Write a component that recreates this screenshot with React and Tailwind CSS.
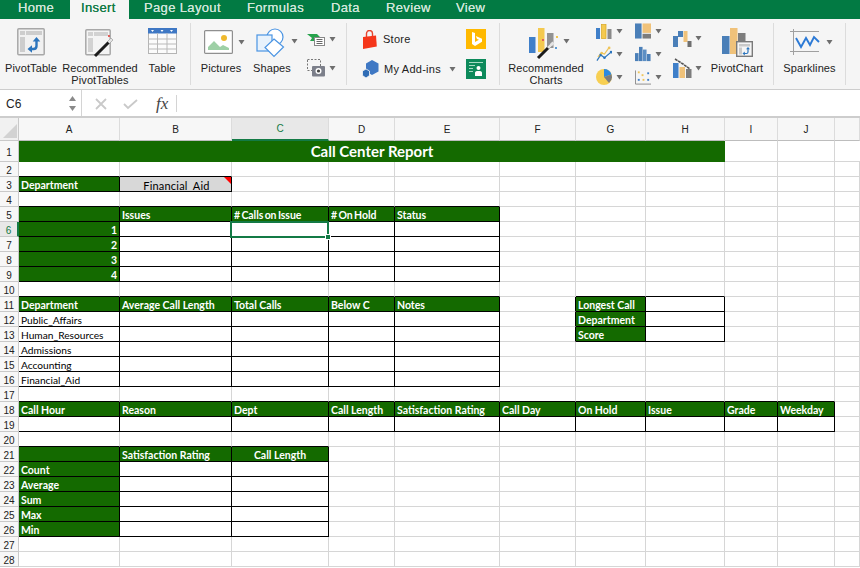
import React from "react";

const UI = { fontFamily: '"Liberation Sans", Arial, sans-serif' };
const CELL = { fontFamily: 'Lato, "Open Sans", sans-serif' };

const Caret = ({ className = "" }) => (
  <svg width="7" height="5" viewBox="0 0 7 5" className={className}><path d="M.5 0h6L3.500 4.500z" fill="#6e6e6e" /></svg>
);

const Pivot = () => (
  <svg width="28" height="28" viewBox="0 0 28 28">
    <rect x=".8" y=".8" width="26.400" height="25.900" rx="1" fill="#f1f1f1" stroke="#a8a8a8" strokeWidth="1.500" />
    <rect x="3" y="3" width="5" height="4" fill="#cdcdcd" />
    <rect x="9" y="3" width="16" height="4" fill="#cdcdcd" />
    <rect x="3" y="9" width="5" height="15" fill="#cdcdcd" />
    <path d="M13 21h3.500c2 0 3-1 3-3v-5" fill="none" stroke="#2c75bd" strokeWidth="2.400" />
    <path d="M10.500 21l4.500-3.800v7.600zM19.500 9l-3.800 4.500h7.600z" fill="#2c75bd" />
  </svg>
);
const Wand = ({ dx = 0, dy = 0 }) => (
  <g transform={`translate(${dx} ${dy})`}>
    <path d="M1 25L18 8" stroke="#1c1c1c" strokeWidth="3" />
    <path d="M14.500 11.500L18 8" stroke="#e4e4e4" strokeWidth="3" />
    <rect x="14" y="4" width="2" height="2" fill="#e0605a" />
    <rect x="21" y="1" width="2" height="2" fill="#f0c64e" />
    <rect x="21" y="11" width="2" height="2" fill="#5b9bd5" />
  </g>
);
const RecPivot = () => (
  <svg width="30" height="30" viewBox="0 0 30 30">
    <rect x=".8" y="1.800" width="24.400" height="24.900" rx="1" fill="#f4f4f4" stroke="#a8a8a8" strokeWidth="1.500" />
    <rect x="3" y="4" width="5" height="4" fill="#d2d2d2" />
    <rect x="9" y="4" width="14" height="4" fill="#d2d2d2" />
    <rect x="3" y="10" width="5" height="14" fill="#d2d2d2" />
    <Wand dx="9" dy="3" />
  </svg>
);
const TableIcon = () => (
  <svg width="29" height="27" viewBox="0 0 29 27">
    <rect x=".5" y=".5" width="28" height="25" fill="#fbfbfb" stroke="#b4b4b4" />
    <rect x="0" y="0" width="29" height="5.500" fill="#3f78c4" />
    <path d="M3 2h3L4.500 4zM12.500 2h3L14 4zM22 2h3L23.500 4z" fill="#fff" />
    <path d="M0 11h29M0 16h29M0 21h29M9.500 5v21M19 5v21" stroke="#b9b9b9" strokeWidth="1" />
  </svg>
);
const Pictures = () => (
  <svg width="29" height="24" viewBox="0 0 29 24">
    <rect x=".6" y=".6" width="27.800" height="22.800" rx="1" fill="#fff" stroke="#8f8f8f" strokeWidth="1.200" />
    <circle cx="20" cy="8" r="3" fill="#efb92e" />
    <path d="M4 20v-3l6-6 6 6 3-2 6 3v2z" fill="#9ed0a6" />
  </svg>
);
const Shapes = () => (
  <svg width="30" height="30" viewBox="0 0 30 30">
    <circle cx="19" cy="9" r="8" fill="#fff" stroke="#4a94e3" strokeWidth="1.200" />
    <rect x="1" y="7" width="15" height="16" fill="#e8f2fc" stroke="#4a94e3" strokeWidth="1.200" />
    <path d="M18 11l9.500 8-9.500 9.500L9 19.500z" fill="#fff" stroke="#4a94e3" strokeWidth="1.200" />
  </svg>
);
const SmartArt = () => (
  <svg width="18" height="13" viewBox="0 0 18 13">
    <path d="M0 1h10l3 3-3 4H3l2-3z" fill="#27a24c" />
    <rect x="7.500" y="4.500" width="10" height="8" fill="#fff" stroke="#888" />
    <path d="M9.500 6.500h6M9.500 8.500h6M9.500 10.500h6" stroke="#666" />
  </svg>
);
const Screenshot = () => (
  <svg width="18" height="18" viewBox="0 0 18 18">
    <rect x=".5" y=".5" width="13" height="11" fill="none" stroke="#777" strokeDasharray="2 1.500" />
    <rect x="5" y="7" width="13" height="10.500" rx="1" fill="#7c7f8a" />
    <circle cx="11.500" cy="12" r="3" fill="#fff" />
    <circle cx="11.500" cy="12" r="1.600" fill="#444" />
  </svg>
);
const StoreIcon = () => (
  <svg width="15" height="19" viewBox="0 0 15 19">
    <path d="M4.500 7V3.500a3 3 0 0 1 6 0V7" fill="none" stroke="#e8432c" strokeWidth="1.400" />
    <path d="M1 7l13-1.500.8 11L1 19z" fill="#f5361a" />
  </svg>
);
const AddIns = () => (
  <svg width="17" height="18" viewBox="0 0 17 18">
    <path d="M10 0l6.500 3.500v8L10 15l-6-3.500v-8z" fill="#3f78c4" />
    <path d="M4 9l3.500 2v4.500L4 18 .5 15.500V11z" fill="#2f6cb5" stroke="#f5f5f5" strokeWidth=".8" />
  </svg>
);
const Bing = () => (
  <svg width="20" height="20" viewBox="0 0 20 20">
    <rect width="20" height="20" fill="#ffb900" />
    <path d="M6 3l3 1v9l4-2.200-2-.9-1.200-3L16 9.800v3L9 17l-3-2z" fill="#fff" />
  </svg>
);
const People = () => (
  <svg width="20" height="20" viewBox="0 0 20 20">
    <rect width="20" height="20" fill="#0d8a5b" />
    <path d="M3 3.500h14M3 6.500h6M3 9.500h4M3 12.500h4" stroke="#a8dbc4" />
    <circle cx="12.500" cy="9" r="2" fill="#fff" />
    <path d="M9 17v-3.500a2 2 0 0 1 2-1.500h3a2 2 0 0 1 2 1.500V17z" fill="#fff" />
  </svg>
);
const RecCharts = () => (
  <svg width="30" height="32" viewBox="0 0 30 32">
    <rect x="0" y="9" width="6.500" height="16" fill="#3f7fc9" />
    <rect x="9" y="0" width="6.500" height="24" fill="#f4c94f" />
    <rect x="18" y="5" width="6.500" height="15" fill="#929292" />
    <g transform="translate(9 5)"><path d="M0 25L13 12" stroke="#1c1c1c" strokeWidth="3" /><path d="M10 15l5.500-5.500" stroke="#e4e4e4" strokeWidth="3" /></g>
    <rect x="13" y="11" width="2" height="2" fill="#e0605a" />
    <rect x="27" y="8" width="2" height="2" fill="#f0c64e" />
    <rect x="26" y="19" width="2" height="2" fill="#5b9bd5" />
  </svg>
);
const ColChart = () => (
  <svg width="16" height="15" viewBox="0 0 16 15">
    <rect x="0" y="4" width="4" height="11" fill="#3f7fc9" />
    <rect x="5.500" y=".5" width="4.500" height="14" fill="#f4c94f" stroke="#d8a520" strokeWidth=".7" />
    <rect x="11.500" y="5" width="4" height="10" fill="#8a8a8a" />
  </svg>
);
const LineChart = () => (
  <svg width="17" height="16" viewBox="0 0 17 16">
    <path d="M1 15l4-6 4 3 7-6" fill="none" stroke="#2c75bd" strokeWidth="1.300" />
    <path d="M2 11l4-4 3 1 5-7" fill="none" stroke="#efc55a" strokeWidth="1.300" />
    <circle cx="5" cy="9" r="1.400" fill="#2c75bd" /><circle cx="9" cy="12" r="1.400" fill="#2c75bd" />
    <circle cx="16" cy="6" r="1.400" fill="#2c75bd" /><circle cx="6" cy="7" r="1.400" fill="#efc55a" />
    <circle cx="14" cy="1.500" r="1.400" fill="#efc55a" />
  </svg>
);
const PieChart = () => (
  <svg width="16" height="16" viewBox="0 0 16 16">
    <circle cx="8" cy="8" r="8" fill="#f7cf52" />
    <path d="M8 8V0a8 8 0 0 1 7.500 5.500z" fill="#2c8ae0" />
    <path d="M8 8l7.500-2.500A8 8 0 0 1 13 14z" fill="#7c7c7c" />
  </svg>
);
const Treemap = () => (
  <svg width="17" height="16" viewBox="0 0 17 16">
    <rect x="0" y="0" width="7" height="16" fill="#4a7fb8" />
    <rect x="8" y="0" width="9" height="10" fill="#f0c27a" />
    <rect x="8" y="11" width="9" height="5" fill="#7d7d7d" />
  </svg>
);
const Histo = () => (
  <svg width="18" height="16" viewBox="0 0 18 16">
    <rect x="0" y="7" width="4" height="9" fill="#4a7fb8" />
    <rect x="4.500" y="0" width="4" height="16" fill="#4a7fb8" />
    <rect x="9" y="3" width="4" height="13" fill="#5c8fc4" />
    <rect x="13.500" y="8" width="4" height="8" fill="#4a7fb8" />
  </svg>
);
const Scatter = () => (
  <svg width="17" height="15" viewBox="0 0 17 15">
    <path d="M.5 0v14.500H17" fill="none" stroke="#8a8a8a" />
    <rect x="3" y="1" width="2" height="2" fill="#efc55a" /><rect x="3" y="9" width="2" height="2" fill="#3f7fc9" />
    <rect x="7" y="4" width="2" height="2" fill="#efc55a" /><rect x="8" y="9" width="2" height="2" fill="#efc55a" />
    <rect x="13" y="2" width="2" height="2" fill="#3f7fc9" /><rect x="13" y="9" width="2" height="2" fill="#3f7fc9" />
  </svg>
);
const Waterfall = () => (
  <svg width="19" height="17" viewBox="0 0 19 17">
    <path d="M0 17V6h5V1h5v6H5v10z" fill="#4a7fb8" />
    <rect x="10.500" y="1" width="4" height="11" fill="#f0c27a" />
    <rect x="14.500" y="11" width="4" height="6" fill="#6f6f6f" />
  </svg>
);
const Combo = () => (
  <svg width="19" height="20" viewBox="0 0 19 20">
    <rect x="0" y="5" width="5.500" height="15" fill="#3f7fc9" />
    <rect x="6.500" y="9" width="5.500" height="11" fill="#f0c27a" />
    <rect x="13" y="11" width="5.500" height="9" fill="#7d7d7d" />
    <path d="M2 1l8 5 7 5" fill="none" stroke="#555" strokeWidth="1.600" strokeDasharray="3 .6" />
  </svg>
);
const PivotChart = () => (
  <svg width="31" height="29" viewBox="0 0 31 29">
    <rect x="0" y="8" width="7.500" height="18" fill="#4a7fb8" />
    <rect x="8" y="0" width="7.500" height="26" fill="#f0c27a" />
    <rect x="16" y="5" width="7.500" height="8" fill="#7d7d7d" />
    <rect x="14.700" y="13.700" width="15.600" height="14.600" fill="#f5f5f5" stroke="#7a7a7a" strokeWidth="1.400" />
    <rect x="17" y="16" width="11" height="2.500" fill="#c9c9c9" />
    <rect x="17" y="19.500" width="3" height="7" fill="#c9c9c9" />
    <path d="M22 25.500h2.500c1 0 1.500-.5 1.500-1.500v-3" fill="none" stroke="#2c75bd" strokeWidth="1.200" />
    <path d="M20.500 25.500l2.300-2v4zM26 19l-2 2.300h4z" fill="#2c75bd" />
  </svg>
);
const Sparkline = () => (
  <svg width="30" height="26" viewBox="0 0 30 26">
    <path d="M3.500 0v26M0 2.500h29M0 22.500h29" stroke="#a0a0a0" fill="none" />
    <path d="M6 9l5 9 5-9 4 7 4-8 5 5" fill="none" stroke="#2c7ad6" strokeWidth="1.900" />
  </svg>
);

const Label = ({ children }) => (
  <div className="text-[11px] leading-[12px] text-[#222] text-center tracking-[0.1px] whitespace-nowrap">{children}</div>
);
const Big = ({ w, icon, children }) => (
  <div className="shrink-0 flex flex-col items-center pt-[9px]" style={{ width: w }}>
    <div className="h-[34px] flex items-start justify-center">{icon}</div>
    <Label>{children}</Label>
  </div>
);
const Sep = () => <div className="shrink-0 w-px h-[62px] mt-[4px] bg-[#dcdcdc]" />;
const Small = ({ icon, w = 16 }) => (
  <div className="flex items-center gap-[4px] h-[16px]">
    <div className="flex justify-center" style={{ width: w }}>{icon}</div>
    <Caret />
  </div>
);

const Ribbon = () => (
  <div className="flex h-[70px] bg-[#f5f5f5] pl-[2px]">
    <Big w={58} icon={<Pivot />}>PivotTable</Big>
    <Big w={80} icon={<RecPivot />}>Recommended<br />PivotTables</Big>
    <Big w={44} icon={<TableIcon />}>Table</Big>
    <div className="w-[6px]" />
    <Sep />
    <div className="w-[5px]" />
    <div className="w-[50px] shrink-0 flex flex-col items-center pt-[11px]">
      <div className="h-[32px] flex gap-[5px] ml-[7px]"><Pictures /><Caret className="mt-[10px]" /></div>
      <Label>Pictures</Label>
    </div>
    <div className="w-[52px] shrink-0 flex flex-col items-center pt-[9px]">
      <div className="h-[34px] flex gap-[5px] ml-[9px]"><Shapes /><Caret className="mt-[11px]" /></div>
      <Label>Shapes</Label>
    </div>
    <div className="w-[48px] shrink-0 flex flex-col gap-[13px] pl-[9px] pt-[14px]">
      <div className="flex items-center gap-[4px] h-[13px]"><SmartArt /><Caret /></div>
      <div className="flex items-center gap-[4px] h-[18px]"><Screenshot /><Caret /></div>
    </div>
    <Sep />
    <div className="w-[15px]" />
    <div className="w-[104px] shrink-0 flex flex-col gap-[10px] pt-[10px] text-[11px] text-[#222] tracking-[0.25px]">
      <div className="flex items-center gap-[6px] h-[20px]"><StoreIcon />Store</div>
      <div className="flex items-center gap-[5px] h-[20px]"><AddIns />My Add-ins<Caret className="ml-[3px]" /></div>
    </div>
    <div className="w-[33px] shrink-0 flex flex-col gap-[10px] pt-[10px]"><Bing /><People /></div>
    <Sep />
    <div className="w-[92px] shrink-0 flex flex-col items-center pt-[9px]">
      <div className="h-[34px] flex gap-[4px] ml-[7px]"><RecCharts /><Caret className="mt-[11px]" /></div>
      <Label>Recommended<br />Charts</Label>
    </div>
    <div className="w-[4px]" />
    <div className="w-[39px] shrink-0 flex flex-col gap-[7px] pt-[4px]">
      <Small icon={<ColChart />} /><Small icon={<LineChart />} /><Small icon={<PieChart />} />
    </div>
    <div className="w-[38px] shrink-0 flex flex-col gap-[7px] pt-[4px]">
      <Small icon={<Treemap />} /><Small icon={<Histo />} /><Small icon={<Scatter />} />
    </div>
    <div className="w-[33px] shrink-0 flex flex-col gap-[11px] pt-[11px]">
      <div className="flex items-center gap-[3px] h-[17px]"><Waterfall /><Caret /></div>
      <div className="flex items-center gap-[3px] h-[20px]"><Combo /><Caret /></div>
    </div>
    <Big w={62} icon={<PivotChart />}>PivotChart</Big>
    <div className="w-[5px]" />
    <Sep />
    <div className="w-[71px] shrink-0 flex flex-col items-center pt-[10px]">
      <div className="h-[33px] flex gap-[6px] ml-[4px]"><Sparkline /><Caret className="mt-[11px]" /></div>
      <Label>Sparklines</Label>
    </div>
    <Sep />
  </div>
);

const Tabs = () => (
  <div className="flex h-[19px] bg-[#027a43] text-[13px] leading-[15px] font-normal tracking-[0.35px] text-[#cfe6da]">
    {[["Home", "w-[70px] pl-[18px]"], ["Insert", "w-[59px] pl-[11px] bg-[#f5f5f5] text-[#137a45]"], ["Page Layout", "w-[103px] pl-[15px]"], ["Formulas", "w-[84px] pl-[15px]"], ["Data", "w-[56px] pl-[15px]"], ["Review", "w-[71px] pl-[14px]"], ["View", "w-[60px] pl-[13px]"]].map(([t, c]) => (
      <div key={t} className={`${c} shrink-0 [text-shadow:0_0_0.4px_currentColor]`}>{t}</div>
    ))}
  </div>
);

const FormulaBar = () => (
  <div className="flex h-[29px] bg-white border-t border-b-2 border-[#cdcdcd] items-center text-[#222]">
    <div className="w-[82px] h-full flex items-center justify-between pl-[6px] pr-[5px] border-r border-[#d4d4d4] text-[12px]">
      <span className="pt-[1px]">C6</span>
      <div className="flex flex-col gap-[5px] pt-[1px]">
        <svg width="7" height="5" viewBox="0 0 7 5"><path d="M0 5L3.500 0 7 5z" fill="#8a8a8a" /></svg>
        <svg width="7" height="5" viewBox="0 0 7 5"><path d="M0 0l3.500 5L7 0z" fill="#8a8a8a" /></svg>
      </div>
    </div>
    <div className="w-[95px] h-[17px] mt-[1px] flex items-center pl-[13px] border-r border-[#d4d4d4]">
      <svg width="12" height="12" viewBox="0 0 12 12"><path d="M1 1l10 10M11 1L1 11" stroke="#c9c9c9" strokeWidth="1.800" /></svg>
      <svg width="15" height="12" viewBox="0 0 15 12" className="ml-[16px]"><path d="M1 6l4 4 9-8" fill="none" stroke="#c9c9c9" strokeWidth="1.800" /></svg>
      <span className="ml-[18px] text-[17px] leading-[17px] italic text-[#444]" style={{ fontFamily: '"Liberation Serif", serif' }}>fx</span>
    </div>
  </div>
);

const G = "g", W = "w";
const rowsData = {
  3: { 0: [G, "Department"] },
  5: { 0: [G, ""], 1: [G, "Issues"], 2: [G, "# Calls on Issue", "t"], 3: [G, "# On Hold", "t"], 4: [G, "Status"] },
  11: { 0: [G, "Department"], 1: [G, "Average Call Length"], 2: [G, "Total Calls"], 3: [G, "Below C"], 4: [G, "Notes"], 6: [G, "Longest Call"], 7: [W, ""] },
  12: { 6: [G, "Department"], 7: [W, ""] },
  13: { 6: [G, "Score"], 7: [W, ""] },
  18: { 0: [G, "Call Hour"], 1: [G, "Reason"], 2: [G, "Dept"], 3: [G, "Call Length"], 4: [G, "Satisfaction Rating"], 5: [G, "Call Day"], 6: [G, "On Hold"], 7: [G, "Issue"], 8: [G, "Grade"], 9: [G, "Weekday"] },
  21: { 0: [G, ""], 1: [G, "Satisfaction Rating"], 2: [G, "Call Length", "c"] },
};
[1, 2, 3, 4].forEach((n, i) => { rowsData[6 + i] = { 0: [G, String(n), "r"], 1: [W, ""], 2: [W, ""], 3: [W, ""], 4: [W, ""] }; });
["Public_Affairs", "Human_Resources", "Admissions", "Accounting", "Financial_Aid"].forEach((t, i) => {
  const r = rowsData[12 + i] || {};
  rowsData[12 + i] = { ...r, 0: [W, t], 1: [W, ""], 2: [W, ""], 3: [W, ""], 4: [W, ""] };
});
rowsData[19] = Object.fromEntries([...Array(10).keys()].map(c => [c, [W, ""]]));
["Count", "Average", "Sum", "Max", "Min"].forEach((t, i) => { rowsData[22 + i] = { 0: [G, t], 1: [W, ""], 2: [W, ""] }; });

const boxed = (r, c) => (r === 3 && c === 1) || !!(rowsData[r] && rowsData[r][c]);
const cols = ["A", "B", "C", "D", "E", "F", "G", "H", "I", "J", ""];

const Cell = ({ r, c }) => {
  const d = rowsData[r] && rowsData[r][c];
  const right = boxed(r, c) || boxed(r, c + 1) ? "border-r-black" : "border-r-[#d6d6d6]";
  const bottom = boxed(r, c) || boxed(r + 1, c) ? "border-b-black" : "border-b-[#d6d6d6]";
  const base = `min-w-0 border-r border-b ${right} ${bottom} overflow-visible whitespace-nowrap flex items-center leading-none pt-[3px]`;
  if (r === 3 && c === 1) {
    return (
      <div className={`${base} relative justify-center pl-[2px] bg-[#d8d8d8] text-[11px] text-black tracking-[0.2px]`}>
        Financial_Aid
        <div className="absolute top-0 right-0 w-0 h-0 border-t-[7px] border-l-[7px] border-t-[#ff0000] border-l-transparent" />
      </div>
    );
  }
  if (!d) return <div className={`${base} bg-white`} />;
  const [kind, text, al] = d;
  const align = al === "r" ? "justify-end pr-[2px]" : al === "c" ? "justify-center" : "pl-[2px]";
  const tight = al === "t" ? "[word-spacing:-1px] tracking-[-0.08px]" : "";
  if (kind === G) return <div className={`${base} ${align} ${tight} bg-[#146a00] text-white font-bold text-[10.500px]`}>{text}</div>;
  return <div className={`${base} ${align} bg-white text-black text-[10.200px]`}>{text}</div>;
};

const Sheet = () => {
  const rows = [...Array(27).keys()].map(i => i + 2);
  return (
    <div className="relative grid grid-cols-[19px_101px_112px_97px_66px_105px_76px_70px_79px_53px_57px_25px] grid-rows-[23px_21px_repeat(27,15px)] bg-white" style={CELL}>
      <div className="bg-[#f1f1f1] border-r border-b border-[#c9c9c9] relative overflow-hidden">
        <div className="absolute right-[1px] bottom-[2px] w-0 h-0 border-b-[14px] border-l-[14px] border-b-[#d2d2d2] border-l-transparent" />
      </div>
      {cols.map((c, i) => (
        <div key={i} className={`flex items-center justify-center border-r border-[#dcdcdc] text-[10px] ${c === "C" ? "bg-[#e8e8e8] border-b-2 border-b-[#137a45] text-[#137a45]" : "bg-[#f7f7f7] border-b border-b-[#bdbdbd] text-[#222]"}`} style={UI}>{c}</div>
      ))}
      <div className="flex items-center justify-center pt-[2px] bg-[#f7f7f7] border-r border-b border-[#c9c9c9] text-[10px] text-[#222]" style={UI}>1</div>
      <div className="col-span-8 bg-[#146a00] text-white font-bold text-[15px] flex items-center justify-center">Call Center Report</div>
      <div className="bg-white border-r border-b border-[#d6d6d6]" />
      <div className="bg-white border-r border-b border-[#d6d6d6]" />
      <div className="bg-white border-b border-[#d6d6d6]" />
      {rows.map(r => (
        <React.Fragment key={r}>
          <div className={`flex items-center justify-center pt-[2px] border-r border-b text-[10px] ${r === 6 ? "bg-[#e8e8e8] border-r-2 border-r-[#137a45] border-b-[#c9c9c9] text-[#137a45]" : "bg-[#f7f7f7] border-[#c9c9c9] text-[#222]"}`} style={UI}>{r}</div>
          {[...Array(11).keys()].map(c => <Cell key={c} r={r} c={c} />)}
        </React.Fragment>
      ))}
      <div className="absolute left-[230px] top-[103px] w-[99px] h-[17px] border-2 border-[#137a45]">
        <div className="absolute -right-[4px] -bottom-[4px] w-[6px] h-[6px] bg-[#137a45] border border-white" />
      </div>
    </div>
  );
};

export default function App() {
  return (
    <div className="w-[860px] h-[568px] overflow-hidden bg-white" style={UI}>
      <Tabs />
      <Ribbon />
      <FormulaBar />
      <Sheet />
    </div>
  );
}
